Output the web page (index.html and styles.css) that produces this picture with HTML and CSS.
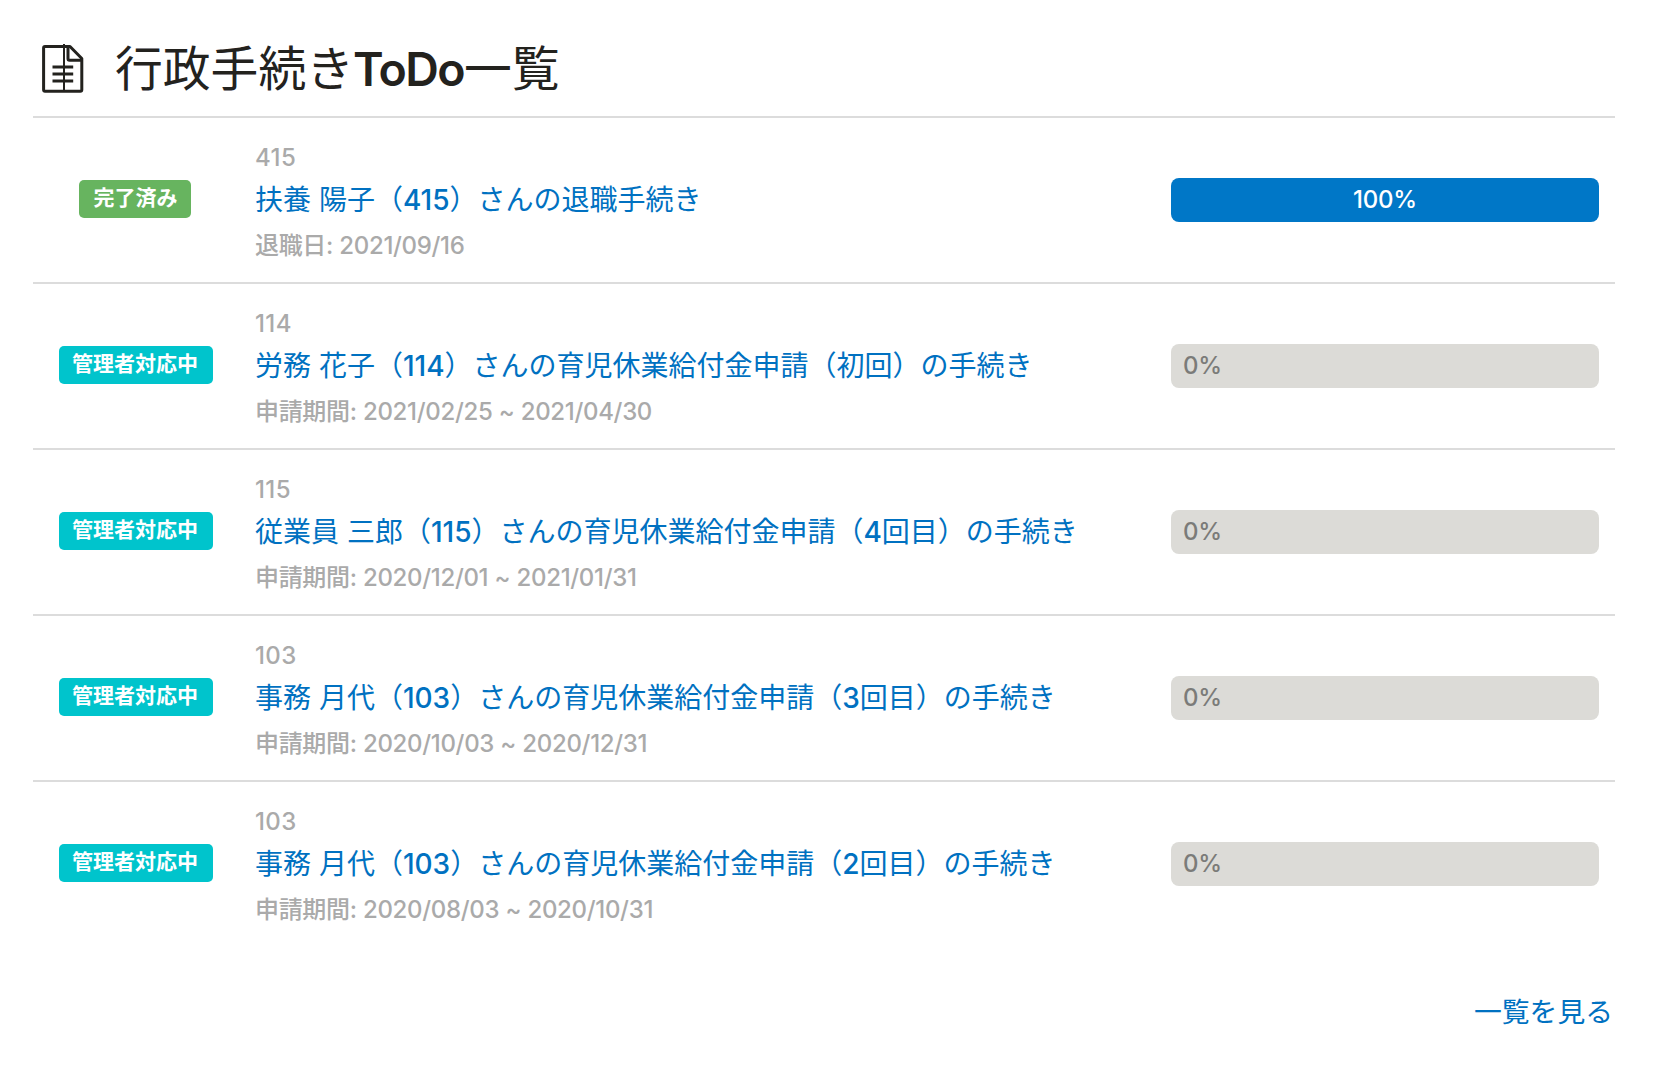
FILE: index.html
```
<!DOCTYPE html>
<html lang="ja">
<head>
<meta charset="utf-8">
<title>行政手続きToDo一覧</title>
<link rel="stylesheet" href="styles.css">
</head>
<body>
<main class="panel">
  <header class="panel-header">
    <svg class="panel-icon" width="42" height="50" viewBox="0 0 42 50" fill="none" stroke="#23221e" stroke-width="3">
      <path d="M3 2.500H28L39.800 14.500V45.800Q39.800 47.200 38.400 47.200H3Q1.600 47.200 1.600 45.800V4Q1.600 2.500 3 2.500Z" stroke-linejoin="round"/>
      <path d="M26 3V14.500Q26 16.300 27.500 16.300H39.800"/>
      <path d="M10.500 23H31.200M10.500 30H31.200M10.500 37H31.200"/>
      <path d="M22 0V47" stroke-width="2"/>
    </svg>
    <h1 class="panel-title">行政手続き<span class="latin">ToDo</span>一覧</h1>
  </header>
  <ul class="todo-list">
    <li class="todo">
      <div class="status"><span class="badge done">完了済み</span></div>
      <div class="detail">
        <p class="number">415</p>
        <a class="name">扶養 陽子（<b>415</b>）さんの退職手続き</a>
        <p class="period">退職日: 2021/09/16</p>
      </div>
      <div class="progress full">100%</div>
    </li>
    <li class="todo">
      <div class="status"><span class="badge">管理者対応中</span></div>
      <div class="detail">
        <p class="number">114</p>
        <a class="name">労務 花子（<b>114</b>）さんの育児休業給付金申請（初回）の手続き</a>
        <p class="period">申請期間: 2021/02/25 ~ 2021/04/30</p>
      </div>
      <div class="progress">0%</div>
    </li>
    <li class="todo">
      <div class="status"><span class="badge">管理者対応中</span></div>
      <div class="detail">
        <p class="number">115</p>
        <a class="name">従業員 三郎（<b>115</b>）さんの育児休業給付金申請（<b>4</b>回目）の手続き</a>
        <p class="period">申請期間: 2020/12/01 ~ 2021/01/31</p>
      </div>
      <div class="progress">0%</div>
    </li>
    <li class="todo">
      <div class="status"><span class="badge">管理者対応中</span></div>
      <div class="detail">
        <p class="number">103</p>
        <a class="name">事務 月代（<b>103</b>）さんの育児休業給付金申請（<b>3</b>回目）の手続き</a>
        <p class="period">申請期間: 2020/10/03 ~ 2020/12/31</p>
      </div>
      <div class="progress">0%</div>
    </li>
    <li class="todo">
      <div class="status"><span class="badge">管理者対応中</span></div>
      <div class="detail">
        <p class="number">103</p>
        <a class="name">事務 月代（<b>103</b>）さんの育児休業給付金申請（<b>2</b>回目）の手続き</a>
        <p class="period">申請期間: 2020/08/03 ~ 2020/10/31</p>
      </div>
      <div class="progress">0%</div>
    </li>
  </ul>
  <footer class="panel-footer"><a class="more">一覧を見る</a></footer>
</main>
</body>
</html>
```
FILE: styles.css
```
* { box-sizing: border-box; }
body {
  margin: 0;
  background: #fff;
  color: #23221e;
  font-family: Inter, "Noto Sans CJK JP", sans-serif;
}
.panel { padding: 20px 38px 0 33px; }
.panel-header {
  display: flex;
  align-items: center;
  height: 96px;
  padding: 2px 0 0 9px;
}
.panel-icon { flex: none; }
.panel-title {
  margin: 0 0 0 31px;
  font-size: 47.8px;
  font-weight: 400;
  line-height: 72px;
  white-space: nowrap;
}
.latin { margin-left: -1px; font-size: 46.5px; font-weight: 600; letter-spacing: -1.6px; }
.todo-list { margin: 0; padding: 0; list-style: none; }
.todo {
  display: grid;
  grid-template-columns: 204px 1fr 428px;
  align-items: center;
  height: 166px;
  padding-right: 16px;
  border-top: 2px solid #dcdcdc;
}
.status { padding-left: 1px; text-align: center; margin-top: -2px; }
.badge {
  display: inline-block;
  height: 38px;
  padding: 0 14.5px 0 13.5px;
  border-radius: 5px;
  background: #00c4cc;
  color: #fff;
  font-size: 21px;
  font-weight: 700;
  line-height: 36px;
  vertical-align: middle;
}
.badge.done { margin-right: 2px; padding: 0 13px 0 15px; background: #67b45f; }
.detail { padding: 4px 0 0 18px; white-space: nowrap; }
.number, .period {
  margin: 0;
  color: #aaa;
  font-size: 24px;
  line-height: 36px;
}
.number { font-weight: 450; letter-spacing: 0.4px; }
.period { font-weight: 450; letter-spacing: -0.32px; word-spacing: 0.2px; }
.name {
  display: block;
  margin: 2px 0 6px;
  color: #0071c1;
  font-size: 28px;
  line-height: 44px;
}
.name b { font-weight: 500; }
.progress {
  height: 44px;
  padding-left: 12px;
  border-radius: 8px;
  background: #dcdbd7;
  color: #7b7b79;
  font-size: 24px;
  font-weight: 450;
  letter-spacing: -0.2px;
  line-height: 44px;
}
.progress.full {
  padding: 0;
  background: #0077c7;
  color: #fff;
  text-align: center;
}
.panel-footer { padding: 45px 2px 0 0; text-align: right; }
.more { color: #0071c1; font-size: 27.8px; line-height: 42px; }
```
